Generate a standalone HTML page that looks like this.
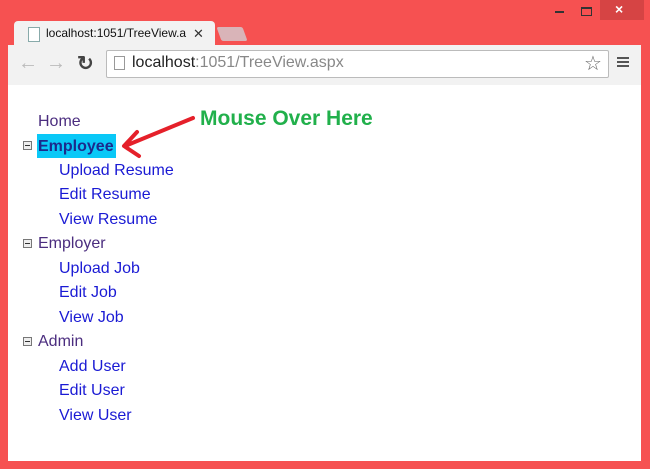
<!DOCTYPE html>
<html><head><style>
body{margin:0;width:650px;height:469px;background:#f65151;position:relative;overflow:hidden;font-family:"Liberation Sans",sans-serif}
.a{position:absolute}
.t{position:absolute;font-size:16px;line-height:20px;white-space:nowrap}
.p{color:#4b2d7f}.c{color:#1a1ad4}
.m{position:absolute;left:23px;width:7px;height:7px;border:1px solid #777;background:#eee}
.m:after{content:"";position:absolute;left:1px;top:3px;width:5px;height:1px;background:#333}
</style></head><body>
<div class="a" style="left:600px;top:0;width:44px;height:20px;background:#d64444"></div>
<div class="a" style="left:615px;top:1px;color:#fff;font-size:14px;font-weight:bold">×</div>
<div class="a" style="left:555px;top:11px;width:9px;height:2px;background:#333"></div>
<div class="a" style="left:581px;top:7px;width:9px;height:6px;border:1px solid #333;border-top-width:2px"></div>
<div class="a" style="left:14px;top:21px;width:201px;height:26px;background:#f2f2f2;border-radius:4px 4px 0 0"></div>
<div class="a" style="left:219px;top:27px;width:26px;height:14px;background:#d9b4b8;transform:skewX(20deg);border-radius:2px"></div>
<div class="a" style="left:28px;top:27px;width:10px;height:13px;background:#fff;border:1px solid #8aa"></div>
<div class="a" style="left:46px;top:26px;font-size:12px;color:#111">localhost:1051/TreeView.a</div>
<div class="a" style="left:193px;top:26px;font-size:13px;color:#333">✕</div>
<div class="a" style="left:8px;top:45px;width:633px;height:40px;background:#f2f2f2"></div>
<div class="a" style="left:18px;top:52px;font-size:20px;color:#bbb">←</div>
<div class="a" style="left:46px;top:52px;font-size:20px;color:#bbb">→</div>
<div class="a" style="left:77px;top:51px;font-size:20px;color:#444;font-weight:bold">↻</div>
<div class="a" style="left:106px;top:50px;width:501px;height:26px;background:#fff;border:1px solid #bbb;border-radius:2px"></div>
<div class="a" style="left:114px;top:56px;width:9px;height:12px;border:1px solid #999;background:#fff"></div>
<div class="a" style="left:132px;top:54px;font-size:16px;color:#222">localhost<span style="color:#888">:1051/TreeView.aspx</span></div>
<div class="a" style="left:584px;top:51px;font-size:20px;color:#666">☆</div>
<div class="a" style="left:617px;top:57px;width:12px;height:2px;background:#555;box-shadow:0 4px #555,0 8px #555"></div>
<div class="a" style="left:8px;top:85px;width:633px;height:376px;background:#fff"></div>
<div class="t p" style="left:38px;top:112px">Home</div>
<div class="m" style="top:141px"></div>
<div class="a" style="left:37px;top:134px;width:79px;height:24px;background:#0ac8f7"></div>
<div class="t" style="left:38px;top:137px;font-weight:bold;color:#1c2a8c">Employee</div>
<div class="t c" style="left:59px;top:161px">Upload Resume</div>
<div class="t c" style="left:59px;top:185px">Edit Resume</div>
<div class="t c" style="left:59px;top:210px">View Resume</div>
<div class="m" style="top:239px"></div>
<div class="t p" style="left:38px;top:234px">Employer</div>
<div class="t c" style="left:59px;top:259px">Upload Job</div>
<div class="t c" style="left:59px;top:283px">Edit Job</div>
<div class="t c" style="left:59px;top:308px">View Job</div>
<div class="m" style="top:337px"></div>
<div class="t p" style="left:38px;top:332px">Admin</div>
<div class="t c" style="left:59px;top:357px">Add User</div>
<div class="t c" style="left:59px;top:381px">Edit User</div>
<div class="t c" style="left:59px;top:406px">View User</div>
<svg class="a" style="left:115px;top:112px" width="85" height="50"><path d="M78 6 L10 34 M22 20 L9 34 L24 44" stroke="#e5202a" stroke-width="4" fill="none" stroke-linecap="round" stroke-linejoin="round"/></svg>
<div class="a" style="left:200px;top:107px;font-size:21px;font-weight:bold;color:#21b04b">Mouse Over Here</div>
</body></html>
